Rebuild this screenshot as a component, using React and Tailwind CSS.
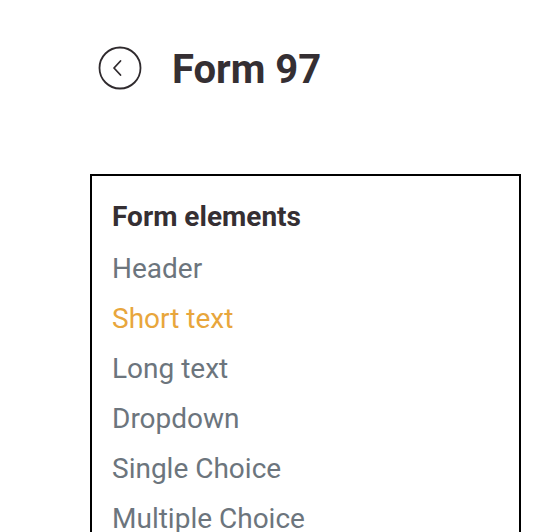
import React from "react";

const items = [
  { label: "Header" },
  { label: "Short text", active: true },
  { label: "Long text" },
  { label: "Dropdown" },
  { label: "Single Choice" },
  { label: "Multiple Choice" },
];

export default function App() {
  return (
    <div className="min-h-screen bg-white pl-[90px] pt-[44px]" style={{ fontFamily: "Roboto, 'Noto Sans', sans-serif" }}>
      <div className="flex items-center h-[48px]">
        <svg width="44" height="44" viewBox="0 0 44 44" className="ml-[8px] shrink-0">
          <circle cx="22" cy="22" r="20.5" fill="none" stroke="#2f2a2d" strokeWidth="1.8" />
          <path d="M22.5 15 L16 22 L22.5 29" fill="none" stroke="#2f2a2d" strokeWidth="1.8" strokeLinecap="round" strokeLinejoin="round" />
        </svg>
        <h1 className="ml-[30px] mt-[4px] text-[40px] leading-[48px] font-bold text-[#352f33]">Form 97</h1>
      </div>
      <div className="mt-[82px] w-[431px] border-2 border-black pt-[20px] pl-[20px] pb-10">
        <div className="text-[28px] leading-[42px] font-bold text-[#352f33] mb-[6px]">Form elements</div>
        {items.map((it) => (
          <div
            key={it.label}
            className={`text-[28px] leading-[50px] ${it.active ? "text-[#e8a63c]" : "text-[#6c757d]"}`}
          >
            {it.label}
          </div>
        ))}
      </div>
    </div>
  );
}
